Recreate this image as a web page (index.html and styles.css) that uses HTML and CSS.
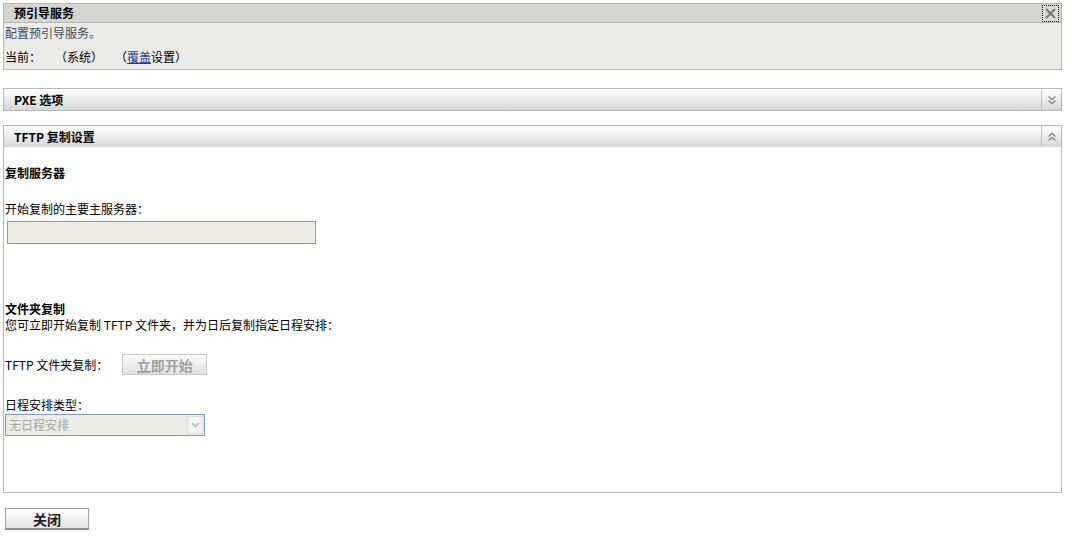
FILE: index.html
```html
<!DOCTYPE html>
<html lang="zh">
<head>
<meta charset="utf-8">
<title>预引导服务</title>
<link rel="stylesheet" href="styles.css">
</head>
<body>
<div class="page">
  <section class="panel panel-info">
    <div class="info-head">
      <span class="title">预引导服务</span>
      <span class="close-x">
        <svg width="13" height="13" viewBox="0 0 13 13"><path d="M2 2 L11 11 M11 2 L2 11" stroke="#7a7a7a" stroke-width="2.2" fill="none"/></svg>
      </span>
    </div>
    <div class="info-body">
      <div class="desc">配置预引导服务。</div>
      <div class="current">当前：<span class="gap1"></span>（系统）<span class="gap2"></span>（<a href="#" class="link">覆盖</a>设置）</div>
    </div>
  </section>

  <section class="panel panel-collapsed">
    <div class="grad-head">
      <span class="title">PXE 选项</span>
      <span class="toggle">
        <svg width="10" height="10" viewBox="0 0 10 10"><path d="M1.5 1.5 L5 4.5 L8.5 1.5 M1.5 5.5 L5 8.5 L8.5 5.5" stroke="#8a8a8a" stroke-width="1.4" fill="none"/></svg>
      </span>
    </div>
  </section>

  <section class="panel panel-open">
    <div class="grad-head">
      <span class="title">TFTP 复制设置</span>
      <span class="toggle">
        <svg width="10" height="10" viewBox="0 0 10 10"><path d="M1.5 4.5 L5 1.5 L8.5 4.5 M1.5 8.5 L5 5.5 L8.5 8.5" stroke="#8a8a8a" stroke-width="1.4" fill="none"/></svg>
      </span>
    </div>
    <div class="open-body">
      <div class="sub-title">复制服务器</div>
      <div class="label gap-label">开始复制的主要主服务器：</div>
      <div class="input-box"></div>
      <div class="sub-title second">文件夹复制</div>
      <div class="label">您可立即开始复制 TFTP 文件夹，并为日后复制指定日程安排：</div>
      <div class="btn-row">
        <span class="label">TFTP 文件夹复制：</span>
        <span class="btn-disabled"><u>立</u>即开始</span>
      </div>
      <div class="label sched-label">日程安排类型：</div>
      <div class="select-box">
        <span class="select-text">无日程安排</span>
        <span class="select-arrow">
          <svg width="9" height="6" viewBox="0 0 9 6"><path d="M1 1 L4.5 4.5 L8 1" stroke="#b8b8b8" stroke-width="1.4" fill="none"/></svg>
        </span>
      </div>
    </div>
  </section>

  <div class="footer">
    <span class="btn-close">关闭</span>
  </div>
</div>
</body>
</html>
```

FILE: styles.css
```css
* { box-sizing: border-box; }
html, body { margin: 0; padding: 0; background: #fff; }
body {
  font-family: "Noto Sans CJK SC", "DejaVu Sans", sans-serif;
  font-size: 12px;
  color: #000;
}
.page {
  padding: 3px 9px 0 3px;
  width: 1071px;
}
.panel {
  border: 1px solid #b7b7b7;
}
.title {
  font-weight: bold;
  line-height: 16px;
}
.info-head {
  height: 19px;
  background: #d5d6d1;
  border-bottom: 1px solid #b7b7b7;
  display: flex;
  align-items: center;
  justify-content: space-between;
  padding-left: 10px;
  padding-right: 2px;
}
.close-x {
  width: 17px;
  height: 17px;
  border: 1px dotted #000;
  display: flex;
  align-items: center;
  justify-content: center;
  background: #dcdcd8;
}
.info-body {
  background: #ebebe8;
  height: 46px;
  padding: 2px 0 0 1px;
}
.desc {
  color: #3a4d5f;
  line-height: 16px;
}
.current {
  margin-top: 8px;
  line-height: 16px;
  display: flex;
  align-items: center;
}
.gap1 { width: 14px; }
.gap2 { width: 12px; }
.link {
  color: #1a3b8c;
  text-decoration: underline;
}
.panel-collapsed {
  margin-top: 18px;
}
.panel-open {
  margin-top: 14px;
}
.grad-head {
  height: 21px;
  background: linear-gradient(#ffffff, #d7d7d7);
  display: flex;
  align-items: center;
  justify-content: space-between;
  padding-left: 10px;
}
.toggle {
  width: 20px;
  height: 21px;
  border-left: 1px solid #c4c4c4;
  display: flex;
  align-items: center;
  justify-content: center;
}
.open-body {
  height: 345px;
  padding: 18px 0 0 1px;
}
.sub-title {
  font-weight: bold;
  line-height: 16px;
}
.sub-title.second { margin-top: 57px; }
.label { line-height: 16px; }
.gap-label { margin-top: 20px; }
.input-box {
  margin-top: 4px;
  margin-left: 2px;
  width: 309px;
  height: 23px;
  background: #ecebe4;
  border: 1px solid #7f9db9;
}
.btn-row {
  margin-top: 21px;
  display: flex;
  align-items: center;
  gap: 14px;
}
.btn-disabled {
  width: 85px;
  height: 21px;
  border: 1px solid #c8c8c8;
  background: linear-gradient(#fbfbfb, #e2e2e2);
  color: #a3a3a3;
  font-weight: bold;
  font-size: 14px;
  display: flex;
  align-items: center;
  justify-content: center;
  line-height: 1;
}
.btn-disabled u { text-decoration-color: #a3a3a3; }
.sched-label { margin-top: 22px; }
.select-box {
  margin-top: 1px;
  width: 200px;
  height: 22px;
  border: 1px solid #7f9db9;
  background: #ecebe4;
  display: flex;
  align-items: center;
  justify-content: space-between;
  padding-left: 3px;
  padding-right: 1px;
}
.select-text {
  color: #a8a8a8;
  line-height: 16px;
}
.select-arrow {
  width: 16px;
  height: 18px;
  border: 1px solid #dedede;
  background: #f3f3f0;
  display: flex;
  align-items: center;
  justify-content: center;
}
.footer {
  padding: 15px 0 0 2px;
}
.btn-close {
  width: 84px;
  height: 22px;
  border: 1px solid #a0a0a0;
  border-bottom: 2px solid #8c8c8c;
  background: linear-gradient(#fdfdfd, #e4e4e4);
  font-weight: bold;
  font-size: 14px;
  color: #222;
  display: flex;
  align-items: center;
  justify-content: center;
  line-height: 1;
}
```
